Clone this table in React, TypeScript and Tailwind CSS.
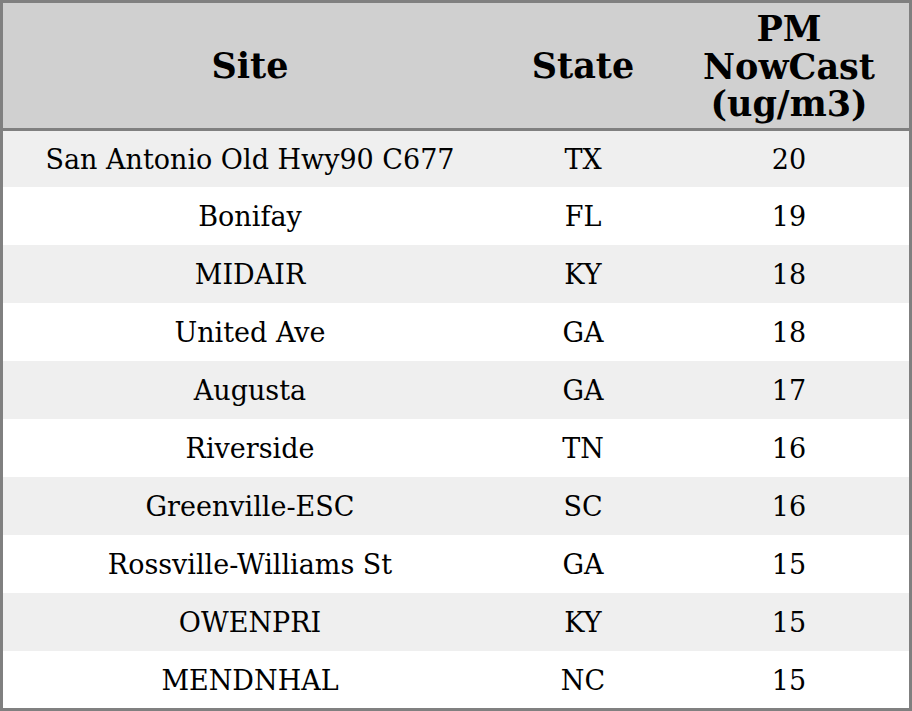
const rows = [
  { site: 'San Antonio Old Hwy90 C677', state: 'TX', pm: 20 },
  { site: 'Bonifay', state: 'FL', pm: 19 },
  { site: 'MIDAIR', state: 'KY', pm: 18 },
  { site: 'United Ave', state: 'GA', pm: 18 },
  { site: 'Augusta', state: 'GA', pm: 17 },
  { site: 'Riverside', state: 'TN', pm: 16 },
  { site: 'Greenville-ESC', state: 'SC', pm: 16 },
  { site: 'Rossville-Williams St', state: 'GA', pm: 15 },
  { site: 'OWENPRI', state: 'KY', pm: 15 },
  { site: 'MENDNHAL', state: 'NC', pm: 15 },
];

export default function App() {
  return (
    <div className="w-[912px] h-[711px] bg-white font-['DejaVu_Serif',serif] text-black">
      <div className="border-[3px] border-[#808080] h-full flex flex-col">
        <div className="grid grid-cols-[494px_172px_240px] h-[125px] bg-[#d0d0d0] border-b-[3px] border-[#808080] box-content text-[35px] font-bold leading-[37.5px]">
          <div className="flex items-center justify-center">Site</div>
          <div className="flex items-center justify-center">State</div>
          <div className="flex items-center justify-center text-center pt-[2px]">
            PM
            <br />
            NowCast
            <br />
            (ug/m3)
          </div>
        </div>
        {rows.map((r, i) => (
          <div
            key={i}
            className={`grid grid-cols-[494px_172px_240px] text-[27px] pt-[3px] ${
              i === 0 ? 'h-[56px]' : i === rows.length - 1 ? 'h-[57px]' : 'h-[58px]'
            } ${i % 2 === 0 ? 'bg-[#efefef]' : 'bg-white'}`}
          >
            <div className="flex items-center justify-center">{r.site}</div>
            <div className="flex items-center justify-center">{r.state}</div>
            <div className="flex items-center justify-center">{r.pm}</div>
          </div>
        ))}
      </div>
    </div>
  );
}
